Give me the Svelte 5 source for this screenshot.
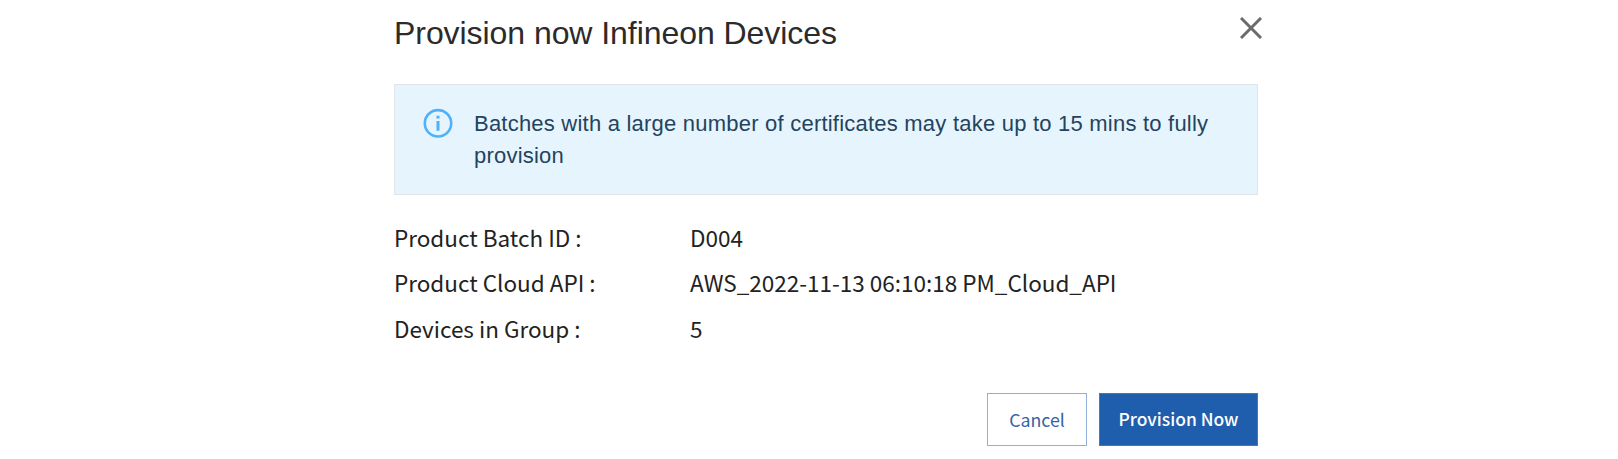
<script>
  const details = [
    { label: 'Product Batch ID :', value: 'D004' },
    { label: 'Product Cloud API :', value: 'AWS_2022-11-13 06:10:18 PM_Cloud_API' },
    { label: 'Devices in Group :', value: '5' }
  ];
</script>

<main class="dialog">
  <header>
    <h1>Provision now Infineon Devices</h1>
    <button class="close" aria-label="Close">
      <svg width="22" height="22" viewBox="0 0 22 22" fill="none" stroke="#6b6b6b" stroke-width="3">
        <path d="M1 1 21 21M21 1 1 21" />
      </svg>
    </button>
  </header>

  <section class="notice">
    <svg width="30" height="30" viewBox="0 0 30 30" fill="none" stroke="#4db1fb">
      <circle cx="15" cy="15.3" r="13.2" stroke-width="2.6" />
      <path d="M15 13V22.8M15 7.7V10.4" stroke-width="3" />
    </svg>
    <p>Batches with a large number of certificates may take up to 15 mins to fully provision</p>
  </section>

  <dl>
    {#each details as item}
      <div class="row">
        <dt>{item.label}</dt>
        <dd>{item.value}</dd>
      </div>
    {/each}
  </dl>

  <footer>
    <button class="btn">Cancel</button>
    <button class="btn primary">Provision Now</button>
  </footer>
</main>

<style>
  :global(body) {
    background: #fff;
  }
  .dialog {
    box-sizing: border-box;
    width: 864px;
    height: 459px;
    margin-left: 394px;
    display: flex;
    flex-direction: column;
    font-family: 'Noto Sans CJK SC', sans-serif;
  }
  header {
    display: flex;
    justify-content: space-between;
    height: 84px;
    margin-right: -4px;
  }
  h1 {
    margin: 13px 0 0;
    font: 400 32px/40px 'Liberation Sans', Arial, sans-serif;
    letter-spacing: -0.06px;
    color: #2b2b2b;
    white-space: nowrap;
  }
  .close {
    width: 22px;
    height: 22px;
    margin: 17px 0 0;
    padding: 0;
    border: 0;
    background: none;
  }
  .close svg {
    display: block;
  }
  .notice {
    box-sizing: border-box;
    display: flex;
    gap: 21px;
    height: 111px;
    padding: 23px 40px 0 28px;
    border: 1px solid #e2e5e9;
    background: #e6f5fd;
  }
  .notice svg {
    flex: none;
  }
  .notice p {
    margin: 0;
    font: 400 22px/31.5px 'Liberation Sans', Arial, sans-serif;
    letter-spacing: 0.22px;
    color: #24435d;
  }
  dl {
    margin: 20px 0 0;
  }
  .row {
    display: grid;
    grid-template-columns: 296px 1fr;
    height: 45.4px;
    line-height: 45.4px;
    font-size: 22.5px;
    color: #222;
    white-space: nowrap;
  }
  dt,
  dd {
    margin: 0;
  }
  footer {
    display: flex;
    justify-content: flex-end;
    gap: 12px;
    margin-top: 42px;
  }
  .btn {
    box-sizing: border-box;
    width: 100px;
    height: 53px;
    padding: 0 0 2px;
    border: 1px solid #8fb0d9;
    background: #fff;
    color: #3563a8;
    font: 400 17.8px/48px 'Noto Sans CJK SC', sans-serif;
    white-space: nowrap;
  }
  .btn.primary {
    width: 159px;
    border-color: #4478b9;
    background: #1f5eac;
    color: #fff;
    font-size: 17.4px;
    font-weight: 500;
  }
</style>
